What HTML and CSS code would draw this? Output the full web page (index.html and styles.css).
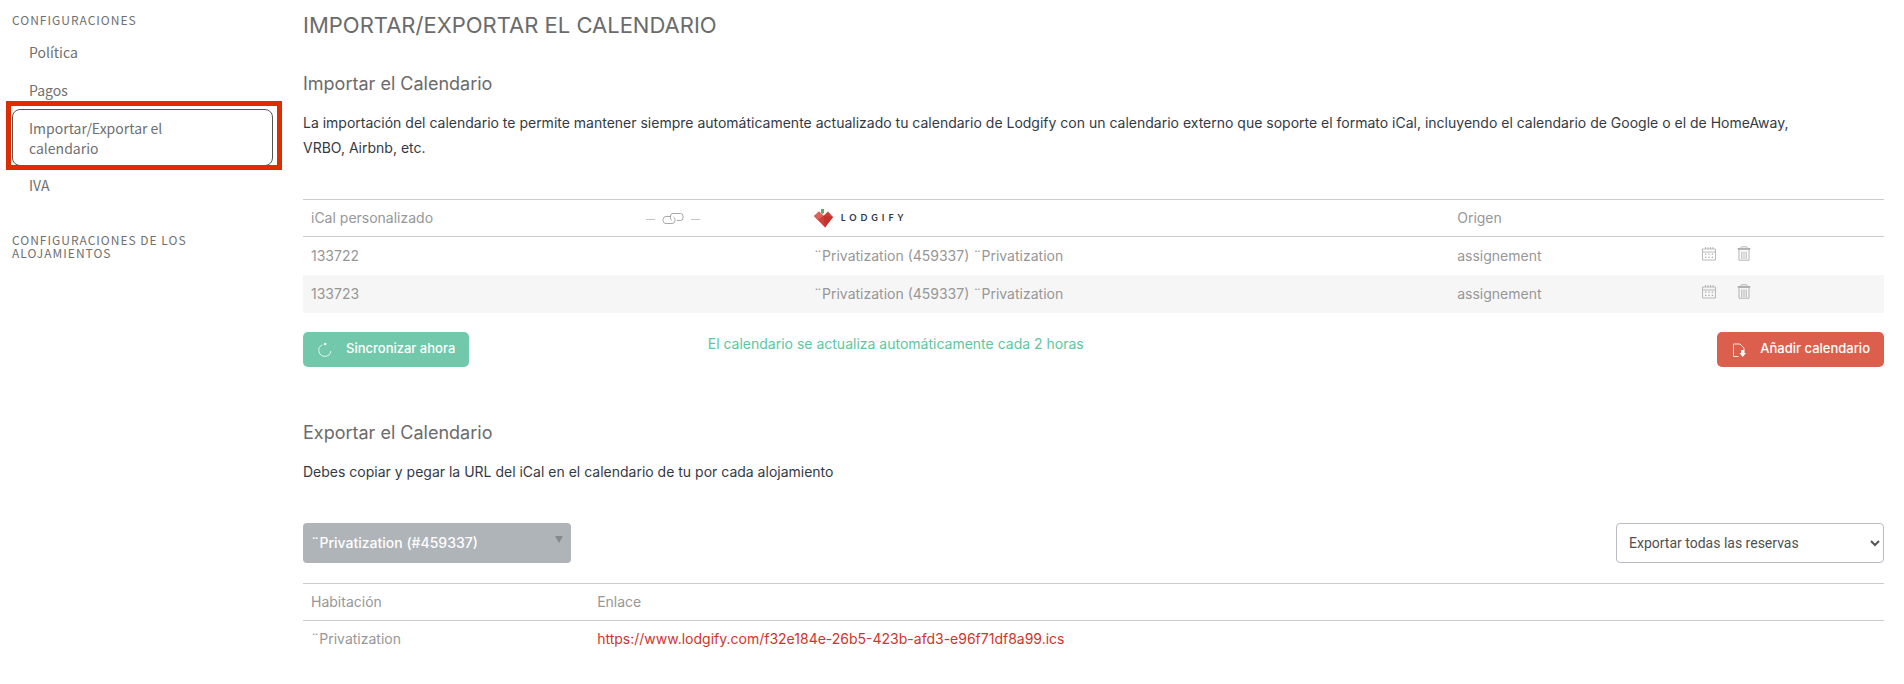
FILE: index.html
```html
<!DOCTYPE html>
<html lang="es">
<head>
<meta charset="utf-8">
<meta name="viewport" content="width=device-width, initial-scale=1">
<title>Importar/Exportar el calendario</title>
<link rel="stylesheet" href="styles.css">
</head>
<body>
<svg class="sprite" aria-hidden="true">
  <symbol id="i-calendar" viewBox="0 0 14 14"><path d="M.5 2.5h13v11H.5zM.5 5.5h13M3.5.5v2M6 .5v2M8.500 .5v2M11 .5v2" fill="none" stroke="currentColor" stroke-width=".8"/><path d="M3 7h1.300v1.300H3zM6.400 7h1.300v1.300H6.400zM9.800 7h1.300v1.300H9.800zM3 10.300h1.300v1.300H3zM6.400 10.300h1.300v1.300H6.400zM9.800 10.300h1.300v1.300H9.800z" fill="currentColor"/></symbol>
  <symbol id="i-trash" viewBox="0 0 14 15"><path d="M.5 2.500h13M1 3.500h12M3.500 2L4.500.8h5L10.500 2M2 3.500v10.700h10V3.500M4.800 5.500v7.500M7 5.500v7.500M9.200 5.500v7.500" fill="none" stroke="currentColor" stroke-width=".9"/></symbol>
</svg>
<div class="layout">
  <nav class="sidebar" aria-label="Configuraciones">
    <h2 class="nav-title">Configuraciones</h2>
    <ul class="nav-list">
      <li><a class="nav-link" href="#politica">Política</a></li>
      <li><a class="nav-link" href="#pagos">Pagos</a></li>
      <li><a class="nav-link nav-link-active" href="#calendario" aria-current="page">Importar/Exportar el calendario</a></li>
      <li><a class="nav-link" href="#iva">IVA</a></li>
    </ul>
    <h2 class="nav-title">Configuraciones de los alojamientos</h2>
  </nav>
  <main class="content">
    <h1 class="page-title">Importar/Exportar el calendario</h1>

    <section class="section">
      <h2 class="section-title">Importar el Calendario</h2>
      <p class="text">La importación del calendario te permite mantener siempre automáticamente actualizado tu calendario de Lodgify con un calendario externo que soporte el formato iCal, incluyendo el calendario de Google o el de HomeAway, VRBO, Airbnb, etc.</p>
      <table class="table table-import">
        <colgroup><col class="c-ical"><col class="c-link"><col class="c-lodgify"><col class="c-origin"><col></colgroup>
        <thead>
          <tr>
            <th scope="col">iCal personalizado</th>
            <th scope="col"><svg class="link-icon" viewBox="0 0 56 14" role="img" aria-label="Vinculado con"><g fill="none" stroke="currentColor"><path d="M1 8.500h9M46 8.500h9" stroke="#c4c4c4"/><path d="M25 5.500h-4a3 3 0 0 0-3 3v1a3 3 0 0 0 3 3h6a3 3 0 0 0 3-3v-1c0-1-.5-1.800-1.500-2.500"/><path d="M32 9.500h3.500a2.500 2.500 0 0 0 2.500-2.500V5a2.500 2.500 0 0 0-2.500-2.500H28A2.500 2.500 0 0 0 25.500 5v2c0 1 .5 1.800 1.500 2.500"/></g></svg></th>
            <th scope="col"><span class="brand"><svg class="brand-icon" viewBox="0 0 19 19" aria-hidden="true"><path d="M0 7l5-4.500 4.500 4.300L14 2.500 19 8 11 18.500z" fill="#d0403b"/><path d="M0 7l5-4.500 4.500 4.300-6 4.200z" fill="#dd6258"/><path d="M9.500 6.800L19 8l-8 10.500-1-6z" fill="#c5332f"/><path d="M7 0h3v4l-1.500 1L7 4z" fill="#55ad78"/></svg><span class="brand-name">LODGIFY</span></span></th>
            <th scope="col">Origen</th>
            <td></td>
          </tr>
        </thead>
        <tbody>
          <tr>
            <td>133722</td><td></td><td>¨Privatization (459337) ¨Privatization</td><td>assignement</td>
            <td><div class="actions"><button class="icon-button" type="button" aria-label="Ver calendario"><svg class="icon"><use href="#i-calendar"/></svg></button><button class="icon-button" type="button" aria-label="Eliminar"><svg class="icon"><use href="#i-trash"/></svg></button></div></td>
          </tr>
          <tr>
            <td>133723</td><td></td><td>¨Privatization (459337) ¨Privatization</td><td>assignement</td>
            <td><div class="actions"><button class="icon-button" type="button" aria-label="Ver calendario"><svg class="icon"><use href="#i-calendar"/></svg></button><button class="icon-button" type="button" aria-label="Eliminar"><svg class="icon"><use href="#i-trash"/></svg></button></div></td>
          </tr>
        </tbody>
      </table>
      <div class="toolbar">
        <button class="button button-green" type="button"><svg class="button-icon" viewBox="0 0 14 16" aria-hidden="true"><path d="M4.500 2.800A6 6 0 1 0 12.800 9" fill="none" stroke="currentColor" stroke-width=".8"/><circle cx="7.200" cy="2" r="1.200" fill="currentColor"/></svg>Sincronizar ahora</button>
        <p class="sync-note">El calendario se actualiza automáticamente cada 2 horas</p>
        <button class="button button-red" type="button"><svg class="button-icon" viewBox="0 0 14 16" aria-hidden="true"><path d="M6.500 14.500H1.500V2H8l4 4v2" fill="none" stroke="currentColor" stroke-width=".8"/><path d="M9 8h3.500v3H14L10.700 15 7.500 11H9z" fill="currentColor"/></svg>Añadir calendario</button>
      </div>
    </section>

    <section class="section">
      <h2 class="section-title">Exportar el Calendario</h2>
      <p class="text">Debes copiar y pegar la URL del iCal en el calendario de tu por cada alojamiento</p>
      <div class="filters">
        <div class="select-wrap">
          <select class="select select-property" aria-label="Alojamiento"><option>¨Privatization (#459337)</option></select>
          <svg class="caret" viewBox="0 0 8 7" aria-hidden="true"><path d="M0 0h8L4 7z" fill="#85898c"/></svg>
        </div>
        <div class="select-wrap">
          <select class="select select-export" aria-label="Reservas"><option>Exportar todas las reservas</option></select>
          <svg class="chevron" viewBox="0 0 10 7" aria-hidden="true"><path d="M1 1l4 4 4-4" fill="none" stroke="#555" stroke-width="2"/></svg>
        </div>
      </div>
      <table class="table table-export">
        <colgroup><col class="c-room"><col></colgroup>
        <thead><tr><th scope="col">Habitación</th><th scope="col">Enlace</th></tr></thead>
        <tbody><tr><td>¨Privatization</td><td><a class="ics-link" href="#ics">https://www.lodgify.com/f32e184e-26b5-423b-afd3-e96f71df8a99.ics</a></td></tr></tbody>
      </table>
    </section>
  </main>
</div>
</body>
</html>
```
FILE: styles.css
```css
* { box-sizing: border-box; }
body { margin: 0; background: #fff; color: #343a45; font-family: Inter, "Open Sans", sans-serif; font-size: 14px; line-height: 20px; }
h1, h2, p, ul { margin: 0; padding: 0; font-weight: 400; }
button, select { font: inherit; }
.sprite { display: none; }
.layout { display: grid; grid-template-columns: 261px minmax(0, 1fr); column-gap: 30px; padding: 11px 20px 24px 12px; }

.sidebar { color: #707070; font-family: "Noto Sans CJK SC", sans-serif; }
.nav-title { max-width: 220px; padding-top: 2px; font-size: 12px; line-height: 13px; letter-spacing: 1px; text-transform: uppercase; }
.nav-list { list-style: none; padding: 7px 0 27px; }
.nav-link { display: block; padding: 8px 80px 8px 16px; border: 1px solid transparent; border-radius: 8px; color: inherit; font-size: 14px; line-height: 20px; text-decoration: none; }
.nav-link-active { position: relative; padding-bottom: 7px; border-color: #555; }
.nav-link-active::after { content: ""; position: absolute; inset: -9px -10px -5px -7px; border: 5px solid #df2b00; pointer-events: none; }

.page-title { color: #6b6b6b; font-size: 22px; line-height: 28px; text-transform: uppercase; }
.section { padding-top: 33px; }
.section + .section { padding-top: 54px; }
.section-title { color: #6b6b6b; font-size: 18px; line-height: 24px; }
.text { padding: 14px 60px 39px 0; line-height: 25px; }

.table { width: 100%; table-layout: fixed; border-collapse: collapse; color: #979797; }
.table th, .table td { height: 37px; padding: 0 8px; text-align: left; font-weight: 400; }
.table tbody td { height: 38px; }
.table thead tr { border-top: 1px solid #ccc; border-bottom: 1px solid #ccc; }
.table-import tbody tr:nth-child(even) { background: #f6f6f6; }
.c-ical { width: 21.1%; }
.c-link { width: 10.7%; }
.c-lodgify { width: 40.7%; }
.c-origin { width: 15.5%; }
.c-room { width: 18.1%; }
.link-icon { display: block; width: 56px; height: 14px; color: #a8a8a8; }
.brand { display: flex; align-items: center; gap: 8px; }
.brand-icon { width: 19px; height: 19px; }
.brand-name { color: #303845; font-family: Lato, sans-serif; font-size: 9px; font-weight: 700; letter-spacing: 4px; }
.actions { display: flex; gap: 21px; }
.icon-button { display: flex; padding: 0 0 4px; border: 0; background: none; color: #aaa; }
.icon { width: 14px; height: 15px; }

.toolbar { display: grid; grid-template-columns: 25.6% 1fr auto; align-items: start; justify-items: start; padding-top: 19px; }
.button { display: flex; align-items: center; gap: 14px; height: 35px; padding: 0 14px 2px 15px; border: 0; border-radius: 5px; color: #fff; font-weight: 500; font-size: 13px; }
.button-icon { width: 14px; height: 16px; margin-top: 4px; }
.button-green { background: #72c8aa; }
.button-red { background: #dc5f4d; }
.sync-note { padding-top: 2px; color: #5cc7a0; }

.section + .section .text { padding-bottom: 39px; }
.filters { display: flex; justify-content: space-between; padding-bottom: 20px; }
.select-wrap { position: relative; width: 268px; }
.select { appearance: none; width: 100%; height: 40px; border-radius: 4px; }
.select-property { padding: 0 24px 0 8px; border: 0; background: #aeb4b8; color: #fff; font-weight: 500; }
.select-export { padding: 0 24px 0 12px; border: 1px solid #b9bcc4; background: #fff; color: #505050; font-family: Roboto, sans-serif; }
.caret { position: absolute; top: 13px; right: 8px; width: 8px; height: 7px; }
.chevron { position: absolute; top: 17px; right: 4px; width: 10px; height: 7px; }
.ics-link { color: #d0342c; text-decoration: none; }
```
